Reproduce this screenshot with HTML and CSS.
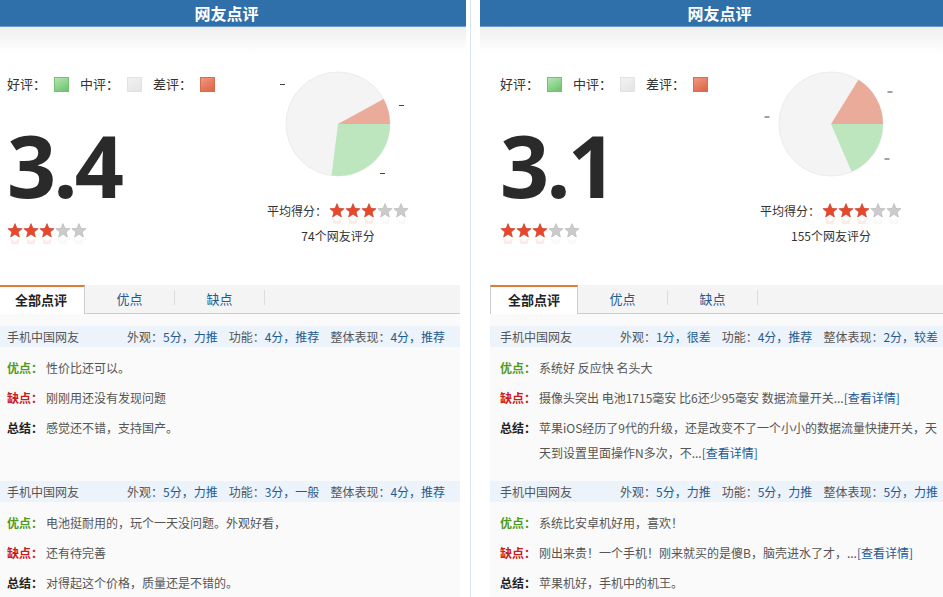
FILE: index.html
```html
<!DOCTYPE html>
<html lang="zh-CN">
<head>
<meta charset="utf-8">
<title>网友点评</title>
<link rel="stylesheet" href="styles.css">
</head>
<body>
<svg class="defs" width="0" height="0" aria-hidden="true">
  <defs>
    <symbol id="star" viewBox="0 0 16 16">
      <path d="M8 0.6 L9.94 5.33 L15.13 5.68 L11.14 9.02 L12.41 14.07 L8 11.3 L3.59 14.07 L4.86 9.02 L0.87 5.68 L6.06 5.33 Z"/>
    </symbol>
    <symbol id="star-r" viewBox="0 0 16 21">
      <use href="#star" x="0" y="0" width="16" height="16"/>
      <use href="#star" x="0" y="0" width="16" height="16" transform="translate(0 30) scale(1 -1)" opacity="0.1"/>
    </symbol>
  </defs>
</svg>

<div class="page">
  <section class="panel">
    <div class="panel-head">网友点评</div>
    <div class="summary">
      <div class="score-col">
        <div class="legend">
          <span class="legend-label">好评：</span><i class="swatch swatch-good"></i>
          <span class="legend-label">中评：</span><i class="swatch swatch-mid"></i>
          <span class="legend-label">差评：</span><i class="swatch swatch-bad"></i>
        </div>
        <div class="score">3.4</div>
        <div class="stars">
          <svg class="star on"><use href="#star-r"/></svg>
          <svg class="star on"><use href="#star-r"/></svg>
          <svg class="star on"><use href="#star-r"/></svg>
          <svg class="star off"><use href="#star-r"/></svg>
          <svg class="star off"><use href="#star-r"/></svg>
        </div>
      </div>
      <div class="chart-col">
        <svg class="pie" viewBox="0 0 160 124">
          <circle cx="80" cy="62" r="52" class="pie-mid"/>
          <path class="pie-bad" d="M80 62 L125.6 37.03 A52 52 0 0 1 132 62 Z"/>
          <path class="pie-good" d="M80 62 L132 62 A52 52 0 0 1 73.48 113.59 Z"/>
          <path class="pie-tick" d="M22 22.5 H27 M141 43.5 H146 M122 111.5 H127"/>
        </svg>
        <div class="avg">
          <span>平均得分：</span>
          <span class="stars stars-avg">
            <svg class="star on"><use href="#star-r"/></svg>
            <svg class="star on"><use href="#star-r"/></svg>
            <svg class="star on"><use href="#star-r"/></svg>
            <svg class="star off"><use href="#star-r"/></svg>
            <svg class="star off"><use href="#star-r"/></svg>
          </span>
        </div>
        <div class="count">74个网友评分</div>
      </div>
    </div>
    <div class="content">
      <div class="tabs">
        <a class="tab tab-active">全部点评</a>
        <a class="tab">优点</a><span class="tab-sep"></span>
        <a class="tab">缺点</a><span class="tab-sep"></span>
      </div>
      <div class="reviews">
        <div class="review">
          <div class="review-head">
            <span class="author">手机中国网友</span>
            <span class="ratings">
              <span class="rate">外观：<em>5分，力推</em></span>
              <span class="rate">功能：<em>4分，推荐</em></span>
              <span class="rate">整体表现：<em>4分，推荐</em></span>
            </span>
          </div>
          <div class="review-row"><b class="label label-pro">优点：</b><span class="text">性价比还可以。</span></div>
          <div class="review-row"><b class="label label-con">缺点：</b><span class="text">刚刚用还没有发现问题</span></div>
          <div class="review-row"><b class="label label-sum">总结：</b><span class="text">感觉还不错，支持国产。</span></div>
        </div>
        <div class="review">
          <div class="review-head">
            <span class="author">手机中国网友</span>
            <span class="ratings">
              <span class="rate">外观：<em>5分，力推</em></span>
              <span class="rate">功能：<em>3分，一般</em></span>
              <span class="rate">整体表现：<em>4分，推荐</em></span>
            </span>
          </div>
          <div class="review-row"><b class="label label-pro">优点：</b><span class="text">电池挺耐用的，玩个一天没问题。外观好看，</span></div>
          <div class="review-row"><b class="label label-con">缺点：</b><span class="text">还有待完善</span></div>
          <div class="review-row"><b class="label label-sum">总结：</b><span class="text">对得起这个价格，质量还是不错的。</span></div>
        </div>
      </div>
    </div>
  </section>

  <div class="divider"></div>

  <section class="panel">
    <div class="panel-head">网友点评</div>
    <div class="summary">
      <div class="score-col">
        <div class="legend">
          <span class="legend-label">好评：</span><i class="swatch swatch-good"></i>
          <span class="legend-label">中评：</span><i class="swatch swatch-mid"></i>
          <span class="legend-label">差评：</span><i class="swatch swatch-bad"></i>
        </div>
        <div class="score">3.1</div>
        <div class="stars">
          <svg class="star on"><use href="#star-r"/></svg>
          <svg class="star on"><use href="#star-r"/></svg>
          <svg class="star on"><use href="#star-r"/></svg>
          <svg class="star off"><use href="#star-r"/></svg>
          <svg class="star off"><use href="#star-r"/></svg>
        </div>
      </div>
      <div class="chart-col">
        <svg class="pie" viewBox="0 0 160 124">
          <circle cx="80" cy="62" r="52" class="pie-mid"/>
          <path class="pie-bad" d="M80 62 L107.4 17.8 A52 52 0 0 1 132 62 Z"/>
          <path class="pie-good" d="M80 62 L132 62 A52 52 0 0 1 100.65 109.72 Z"/>
          <path class="pie-tick" d="M13.5 55 H18.5 M136.5 30 H141.5 M133.5 97 H138.5"/>
        </svg>
        <div class="avg">
          <span>平均得分：</span>
          <span class="stars stars-avg">
            <svg class="star on"><use href="#star-r"/></svg>
            <svg class="star on"><use href="#star-r"/></svg>
            <svg class="star on"><use href="#star-r"/></svg>
            <svg class="star off"><use href="#star-r"/></svg>
            <svg class="star off"><use href="#star-r"/></svg>
          </span>
        </div>
        <div class="count">155个网友评分</div>
      </div>
    </div>
    <div class="content">
      <div class="tabs">
        <a class="tab tab-active">全部点评</a>
        <a class="tab">优点</a><span class="tab-sep"></span>
        <a class="tab">缺点</a><span class="tab-sep"></span>
      </div>
      <div class="reviews">
        <div class="review">
          <div class="review-head">
            <span class="author">手机中国网友</span>
            <span class="ratings">
              <span class="rate">外观：<em>1分，很差</em></span>
              <span class="rate">功能：<em>4分，推荐</em></span>
              <span class="rate">整体表现：<em>2分，较差</em></span>
            </span>
          </div>
          <div class="review-row"><b class="label label-pro">优点：</b><span class="text">系统好 反应快 名头大</span></div>
          <div class="review-row"><b class="label label-con">缺点：</b><span class="text">摄像头突出 电池1715毫安 比6还少95毫安 数据流量开关...<a class="more">[查看详情]</a></span></div>
          <div class="review-row"><b class="label label-sum">总结：</b><span class="text">苹果iOS经历了9代的升级，还是改变不了一个小小的数据流量快捷开关，天天到设置里面操作N多次，不...<a class="more">[查看详情]</a></span></div>
        </div>
        <div class="review">
          <div class="review-head">
            <span class="author">手机中国网友</span>
            <span class="ratings">
              <span class="rate">外观：<em>5分，力推</em></span>
              <span class="rate">功能：<em>5分，力推</em></span>
              <span class="rate">整体表现：<em>5分，力推</em></span>
            </span>
          </div>
          <div class="review-row"><b class="label label-pro">优点：</b><span class="text">系统比安卓机好用，喜欢！</span></div>
          <div class="review-row"><b class="label label-con">缺点：</b><span class="text">刚出来贵！一个手机！刚来就买的是傻B，脑壳进水了才，...<a class="more">[查看详情]</a></span></div>
          <div class="review-row"><b class="label label-sum">总结：</b><span class="text">苹果机好，手机中的机王。</span></div>
        </div>
      </div>
    </div>
  </section>
</div>
</body>
</html>
```
FILE: styles.css
```css
* { box-sizing: border-box; }

html, body { margin: 0; padding: 0; }

body {
  width: 943px;
  height: 597px;
  overflow: hidden;
  background: #fff;
  font-family: "Noto Sans CJK SC", "Liberation Sans", sans-serif;
  font-size: 12px;
  line-height: 1.5;
  color: #555;
}

.defs { position: absolute; width: 0; height: 0; overflow: hidden; }

.page {
  display: flex;
  margin-left: -13px;
  height: 597px;
  overflow: hidden;
}

.panel {
  width: 479px;
  flex: none;
  overflow: hidden;
}

.divider {
  width: 1px;
  flex: none;
  margin: 0 9px 0 4px;
  background: #dbe5ef;
}

.panel-head {
  height: 27px;
  background: #2f6faa;
  border-bottom: 1px solid #6b9bcb;
  color: #fff;
  font-size: 16px;
  font-weight: bold;
  line-height: 26px;
  text-align: center;
}

/* summary */
.summary {
  height: 258px;
  display: flex;
  background: linear-gradient(#efefef, #fff 26px);
}

.score-col {
  width: 271px;
  flex: none;
  padding-left: 20px;
  padding-top: 47px;
}

.legend {
  display: flex;
  align-items: center;
  height: 20px;
  font-size: 13px;
  color: #333;
}

.legend-label { margin-right: 8px; }

.swatch {
  width: 15px;
  height: 15px;
  margin-right: 11px;
  border: 1px solid;
}

.swatch-good {
  background: linear-gradient(150deg, #b5e6b5 0%, #8fd48f 50%, #6cc06c 100%);
  border-color: #72c272;
}

.swatch-mid {
  background: linear-gradient(150deg, #f2f2f2, #e4e4e4);
  border-color: #e2e2e2;
}

.swatch-bad {
  background: linear-gradient(150deg, #f09a82 0%, #e67a5e 55%, #dc6646 100%);
  border-color: #db6b4e;
}

.score {
  margin-top: 28px;
  font-family: "Open Sans", "DejaVu Sans", sans-serif;
  font-weight: 700;
  font-size: 86px;
  line-height: 86px;
  color: #2a2a2a;
  letter-spacing: -3px;
}

.stars {
  display: flex;
  margin-top: 15px;
}

.star {
  width: 16px;
  height: 21px;
  flex: none;
  overflow: hidden;
}

.star.on { fill: #e9462b; stroke: #c33a22; stroke-width: 0.6; }
.star.off { fill: #cbcbcb; stroke: #b3b3b3; stroke-width: 0.6; }

.chart-col {
  width: 160px;
  flex: none;
  padding-top: 35px;
  display: flex;
  flex-direction: column;
  align-items: center;
}

.pie {
  display: block;
  width: 160px;
  height: 124px;
}

.pie-mid { fill: #f4f4f4; stroke: #ececec; stroke-width: 1; }
.pie-bad { fill: #ebab9b; }
.pie-good { fill: #bee6be; }
.pie-tick { stroke: #444; stroke-width: 1; fill: none; }

.avg {
  display: flex;
  align-items: flex-start;
  height: 20px;
  margin-top: 15px;
  color: #333;
  line-height: 20px;
}

.stars-avg {
  margin-top: 2px;
  margin-left: 2px;
}

.count {
  margin-top: 5px;
  line-height: 20px;
  color: #333;
}

/* tabs + reviews */
.content {
  padding: 0 6px 0 10px;
}

.tabs {
  display: flex;
  align-items: flex-start;
  height: 29px;
  background: #f4f4f4;
  border-bottom: 1px solid #cdcdcd;
}

.tab {
  width: 89px;
  height: 28px;
  flex: none;
  text-align: center;
  font-size: 13px;
  line-height: 28px;
  color: #1f5b92;
}

.tab-active {
  width: 88px;
  height: 29px;
  background: #fff;
  border-top: 2px solid #e07a36;
  border-left: 1px solid #cdcdcd;
  border-right: 1px solid #cdcdcd;
  line-height: 26px;
  font-weight: bold;
  color: #222;
}

.tab-sep {
  width: 1px;
  height: 15px;
  margin-top: 5px;
  flex: none;
  background: #dcdcdc;
}

.reviews {
  padding-top: 12px;
  background: #fafafa;
}

.review {
  height: 155px;
}

.review-head {
  display: flex;
  height: 21px;
  line-height: 21px;
  padding-left: 10px;
  background: #edf3fa;
  color: #555;
  white-space: nowrap;
}

.author {
  width: 120px;
  flex: none;
}

.ratings {
  display: flex;
  gap: 11px;
}

.rate em {
  font-style: normal;
  color: #1f5b8f;
}

.review-row {
  display: flex;
  margin-top: 5px;
  padding: 0 12px 0 10px;
  line-height: 25px;
  color: #555;
}

.review-head + .review-row { margin-top: 8px; }

.label {
  flex: none;
  margin-right: 3px;
  font-weight: bold;
}

.label-pro { color: #4e9a1c; }
.label-con { color: #cc1b1b; }
.label-sum { color: #222; }

.text { min-width: 0; }

.more { color: #1a5896; }
```
